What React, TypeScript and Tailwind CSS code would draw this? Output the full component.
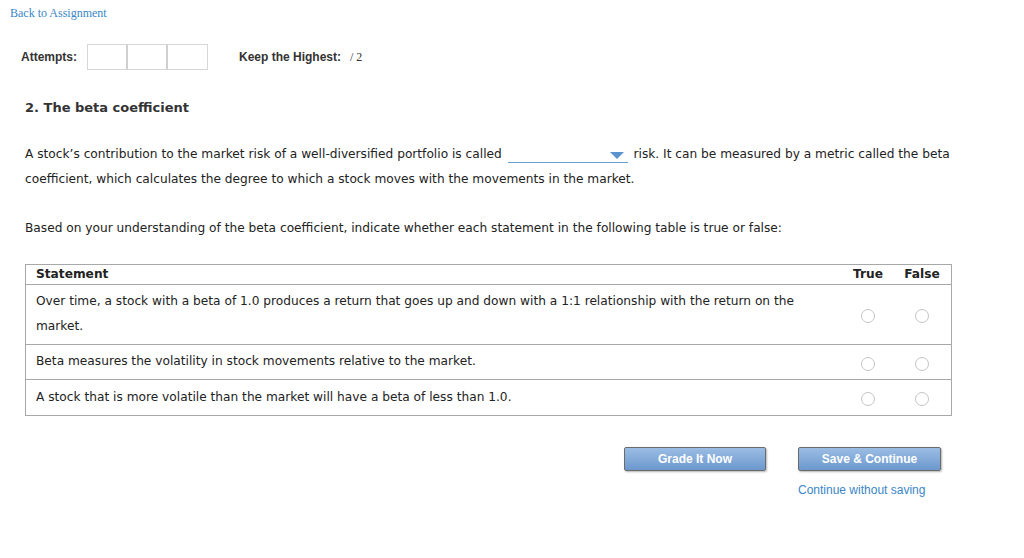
import React from 'react';

const rows = [
  'Over time, a stock with a beta of 1.0 produces a return that goes up and down with a 1:1 relationship with the return on the market.',
  'Beta measures the volatility in stock movements relative to the market.',
  'A stock that is more volatile than the market will have a beta of less than 1.0.',
];

const Radio = () => (
  <span className="inline-block w-[14px] h-[14px] rounded-full border border-[#c4c4c4] bg-white" />
);

const App: React.FC = () => {
  return (
    <div className="w-[1024px] h-[558px] bg-white text-[#222] font-['DejaVu_Sans',Verdana,sans-serif]">
      <div className="pl-[10px] pt-[6px] text-[12px] leading-[14px] text-[#3a86c8] font-['Liberation_Serif',serif]">
        Back to Assignment
      </div>

      <div className="flex items-center mt-[24px] pl-[21px] font-['Liberation_Sans',Arial,sans-serif] text-[12px] font-bold text-[#333]">
        <span>Attempts:</span>
        <div className="flex ml-[10px] border border-[#d6d6d6]">
          <span className="w-[40px] h-[24px] border-r-2 border-[#d0d0d0]" />
          <span className="w-[40px] h-[24px] border-r-2 border-[#d0d0d0]" />
          <span className="w-[39px] h-[24px]" />
        </div>
        <span className="ml-[31px]">Keep the Highest:</span>
        <span className="ml-[9px] font-normal font-['Liberation_Serif',serif] text-[12px]">/ 2</span>
      </div>

      <div className="pl-[25px] mt-[28px] text-[13px] font-bold text-[#333]">2. The beta coefficient</div>

      <div className="pl-[25px] pr-[60px] mt-[24px] text-[12.2px] leading-[25px]">
        <p>
          A stock’s contribution to the market risk of a well-diversified portfolio is called{' '}
          <span className="relative inline-block w-[120px] h-[16px] align-[-5px] border-b border-[#6a9fd4] mx-[2px]">
            <span className="absolute right-[4px] top-[5px] w-0 h-0 border-l-[7px] border-r-[7px] border-t-[7px] border-l-transparent border-r-transparent border-t-[#5b93cf]" />
          </span>{' '}
          risk. It can be measured by a metric called the beta coefficient, which calculates the degree to which a stock moves with the movements in the market.
        </p>
        <p className="mt-[24px]">
          Based on your understanding of the beta coefficient, indicate whether each statement in the following table is true or false:
        </p>
      </div>

      <div className="ml-[25px] mt-[23px] w-[927px] border border-[#a8a8a8] text-[12.2px]">
        <div className="flex items-center h-[20px] border-b border-[#a8a8a8] font-bold">
          <span className="flex-1 pl-[10px]">Statement</span>
          <span className="w-[54px] text-center">True</span>
          <span className="w-[54px] text-center mr-[2px]">False</span>
        </div>
        {rows.map((r, i) => (
          <div
            key={i}
            className={`flex items-center border-[#a8a8a8] ${i < rows.length - 1 ? 'border-b' : ''} ${i === 0 ? 'h-[60px]' : 'h-[35px]'}`}
          >
            <span className="flex-1 pl-[10px] pr-[40px] leading-[25px]">{r}</span>
            <span className="w-[54px] flex justify-center pt-[4px]"><Radio /></span>
            <span className="w-[54px] flex justify-center pt-[4px] mr-[2px]"><Radio /></span>
          </div>
        ))}
      </div>

      <div className="flex mt-[31px] pl-[624px] font-['Liberation_Sans',Arial,sans-serif]">
        <button className="w-[142px] h-[24px] rounded-[2px] border border-[#6b6b6b] bg-gradient-to-b from-[#9bbde4] to-[#6c98ce] text-white text-[12px] font-bold shadow-[1px_1px_2px_rgba(0,0,0,0.3)]">
          Grade It Now
        </button>
        <div className="ml-[32px] flex flex-col">
          <button className="w-[143px] h-[24px] rounded-[2px] border border-[#6b6b6b] bg-gradient-to-b from-[#9bbde4] to-[#6c98ce] text-white text-[12px] font-bold shadow-[1px_1px_2px_rgba(0,0,0,0.3)]">
            Save &amp; Continue
          </button>
          <span className="mt-[10px] text-[12px] text-[#3a86c8]">Continue without saving</span>
        </div>
      </div>
    </div>
  );
};

export default App;
